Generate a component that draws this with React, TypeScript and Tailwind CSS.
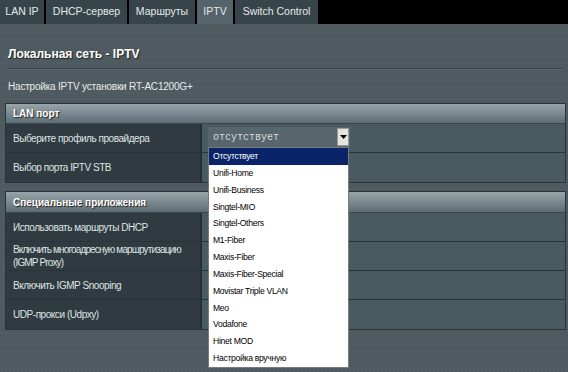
import React from "react";

const tabs = [
  { label: "LAN IP", w: "w-[44px]" },
  { label: "DHCP-сервер", w: "w-[81px]" },
  { label: "Маршруты", w: "w-[66px]" },
  { label: "IPTV", w: "w-[36px]", active: true },
  { label: "Switch Control", w: "w-[83px]" },
];

const options = [
  "Отсутствует",
  "Unifi-Home",
  "Unifi-Business",
  "Singtel-MIO",
  "Singtel-Others",
  "M1-Fiber",
  "Maxis-Fiber",
  "Maxis-Fiber-Special",
  "Movistar Triple VLAN",
  "Meo",
  "Vodafone",
  "Hinet MOD",
  "Настройка вручную",
];

function Row({ label, h, last }: { label: React.ReactNode; h: string; last?: boolean }) {
  return (
    <div className={`flex ${h} ${last ? "" : "border-b border-[#2a3337]"}`}>
      <div className="w-[196px] bg-[#2f3b40] border-r-2 border-[#262f33] pl-[7px] pr-[2px] flex items-center whitespace-nowrap text-[10px] leading-[13px] tracking-[-0.45px] text-[#dfe3e4]">
        {label}
      </div>
      <div className="flex-1 bg-[#495a60]" />
    </div>
  );
}

export default function App() {
  return (
    <div className="relative w-[568px] h-[372px] overflow-hidden bg-[#4e5a5f] bg-[radial-gradient(circle,#58656a_0.6px,transparent_0.8px)] bg-[length:4px_6px] font-['Liberation_Sans',Arial,sans-serif]">
      <div className="flex h-[24px] bg-black gap-[2px]">
        {tabs.map((t) => (
          <div
            key={t.label}
            className={`${t.w} h-full flex items-center justify-center text-[10.5px] text-[#e4e8e9] ${
              t.active ? "bg-[#55636a]" : "bg-[#37454b]"
            }`}
          >
            {t.label}
          </div>
        ))}
      </div>

      <div className="pl-[8px] pr-[5px] pt-[22px]">
        <div className="text-[12px] leading-[16px] font-bold text-white [text-shadow:1px_1px_1px_#1e2528]">
          Локальная сеть - IPTV
        </div>
        <div className="mt-[6px] h-[2px] border-t border-[#3a4549] border-b border-b-[#5a676c]" />
        <div className="mt-[10px] text-[10px] leading-[14px] tracking-[-0.2px] text-[#e8ebec]">
          Настройка IPTV установки RT-AC1200G+
        </div>
      </div>

      <div className="mx-[5px] mt-[9px] w-[561px] border border-[#2a3337]">
        <div className="h-[20px] bg-gradient-to-b from-[#97a4a9] via-[#7b8a90] to-[#5e6d73] border-b border-[#3a4549] flex items-center pl-[7px] text-[10px] font-bold text-white [text-shadow:1px_1px_1px_#222]">
          LAN порт
        </div>
        <Row label="Выберите профиль провайдера" h="h-[29px]" />
        <Row label="Выбор порта IPTV STB" h="h-[29px]" last />
      </div>

      <div className="mx-[5px] mt-[8px] w-[561px] border border-[#2a3337]">
        <div className="h-[21px] bg-gradient-to-b from-[#97a4a9] via-[#7b8a90] to-[#5e6d73] border-b border-[#3a4549] flex items-center pl-[7px] text-[10px] font-bold text-white [text-shadow:1px_1px_1px_#222]">
          Специальные приложения
        </div>
        <Row label="Использовать маршруты DHCP" h="h-[29px]" />
        <Row
          label={
            <span className="tracking-[-0.85px]">
              Включить многоадресную маршрутизацию
              <br />
              (IGMP Proxy)
            </span>
          }
          h="h-[29px]"
        />
        <Row label="Включить IGMP Snooping" h="h-[29px]" />
        <Row label="UDP-прокси (Udpxy)" h="h-[29px]" last />
      </div>

      {/* select */}
      <div className="absolute left-[208px] top-[127px] w-[142px] h-[20px] bg-[#56666c] flex items-center">
        <span className="pl-[5px] flex-1 font-['Liberation_Mono',monospace] text-[10px] text-[#d6dbdd]">
          отсутствует
        </span>
        <div className="w-[12px] h-[18px] mr-[1px] bg-[#e4e4e0] border border-[#9a9a96] flex items-center justify-center">
          <svg width="7" height="4" viewBox="0 0 7 4">
            <polygon points="0,0 7,0 3.5,4" fill="#000" />
          </svg>
        </div>
      </div>

      {/* dropdown list */}
      <div className="absolute left-[208px] top-[147px] w-[141px] bg-white border border-[#7a7a7a] text-[8.6px] tracking-[-0.3px] text-black">
        {options.map((o, i) => (
          <div
            key={o}
            className={`h-[16.85px] flex items-center pl-[4px] ${i === 0 ? "bg-[#0a246a] text-white" : ""}`}
          >
            {o}
          </div>
        ))}
      </div>
    </div>
  );
}
